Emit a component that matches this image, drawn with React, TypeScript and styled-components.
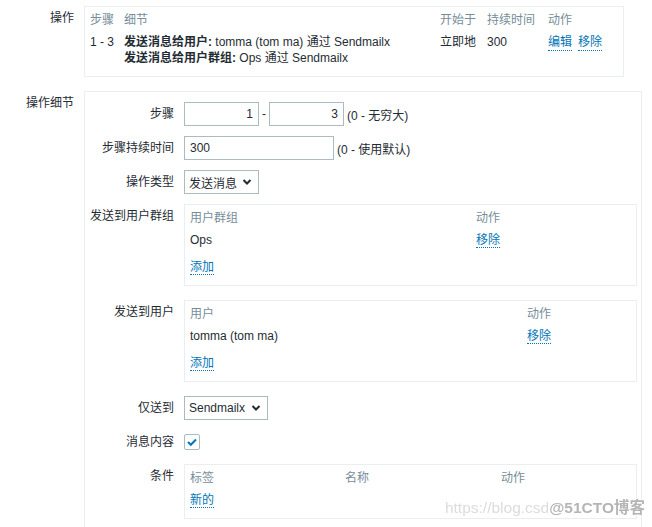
import React from 'react'
import styled, { createGlobalStyle } from 'styled-components'

const GlobalStyle = createGlobalStyle`
  html, body {
    margin: 0;
    padding: 0;
    background: #fff;
    overflow: hidden;
  }
  body {
    font-family: "Liberation Sans", Arial, "Noto Sans CJK SC", sans-serif;
    font-size: 12px;
    color: #1f2c33;
  }
`

const Page = styled.div`
  display: grid;
  grid-template-columns: 74px auto;
  column-gap: 10px;
  row-gap: 14px;
  padding-top: 6px;
  align-items: start;
`

const SectionLabel = styled.div`
  text-align: right;
  line-height: 24px;
  white-space: nowrap;
`

const TableBox = styled.div<{ $width: number }>`
  width: ${p => p.$width}px;
  box-sizing: border-box;
  border: 1px solid #ebeef0;
  padding: 5px 5px 10px;
`

const TRow = styled.div<{ $cols: string; $head?: boolean }>`
  display: grid;
  grid-template-columns: ${p => p.$cols};
  line-height: 16px;
  color: ${p => (p.$head ? '#768d99' : '#1f2c33')};
  white-space: nowrap;

  & + & {
    margin-top: 6px;
  }
`

const AddRow = styled.div`
  margin-top: 11px;
  line-height: 16px;
`

const Link = styled.a`
  color: #0275b8;
  text-decoration: none;
  border-bottom: 1px dotted #0275b8;
  cursor: pointer;
`

const Links = styled.div`
  display: flex;
  gap: 6px;
  align-items: flex-start;
`

const Detail = styled.div`
  display: flex;
  flex-direction: column;
`

const OuterBox = styled.div`
  width: 558px;
  height: 460px;
  box-sizing: border-box;
  border: 1px solid #ebeef0;
  padding: 10px 4px 0 0;
`

const FormRow = styled.div<{ $gap?: number }>`
  display: grid;
  grid-template-columns: 89px 453px;
  column-gap: 10px;
  align-items: start;
  padding-bottom: ${p => p.$gap ?? 10}px;
`

const FieldLabel = styled.label`
  text-align: right;
  line-height: 24px;
  white-space: nowrap;
`

const Field = styled.div`
  display: flex;
  align-items: center;
  min-height: 24px;
`

const TextInput = styled.input<{ $width: number; $right?: boolean }>`
  width: ${p => p.$width}px;
  height: 24px;
  box-sizing: border-box;
  border: 1px solid #acbbc2;
  padding: 0 5px;
  margin: 0;
  font: inherit;
  color: #1f2c33;
  text-align: ${p => (p.$right ? 'right' : 'left')};
  background: #fff;
  outline: none;
`

const Dash = styled.span`
  margin: 0 3px;
`

const Hint = styled.span`
  margin-left: 3px;
  white-space: nowrap;
`

const SelectBox = styled.div<{ $width: number }>`
  width: ${p => p.$width}px;
  height: 24px;
  box-sizing: border-box;
  border: 1px solid #acbbc2;
  padding: 0 6px 0 4px;
  display: flex;
  align-items: center;
  justify-content: space-between;
  background: #fff;
  white-space: nowrap;
`

const CheckField = styled.div`
  height: 24px;
  display: flex;
  align-items: center;
`

const CheckBox = styled.span`
  width: 16px;
  height: 16px;
  box-sizing: border-box;
  border: 1px solid #acbbc2;
  border-radius: 2px;
  display: flex;
  align-items: center;
  justify-content: center;
  background: #fff;
`

const Watermark = styled.div`
  position: fixed;
  right: 7px;
  bottom: 9px;
  font-size: 15.5px;
  line-height: 20px;
  white-space: nowrap;
  pointer-events: none;
`

const Faint = styled.span`
  color: #dcdcdc;
`

const Mark = styled.span`
  color: #b5b5b5;
  font-weight: bold;
  text-shadow: 0 0 2px #fff, 0 0 2px #fff;
`

const Chevron = () => (
  <svg width="10" height="10" viewBox="0 0 10 10">
    <polyline points="1.5,3 5,6.5 8.5,3" fill="none" stroke="#1f2c33" strokeWidth="2" />
  </svg>
)

const Check = () => (
  <svg width="12" height="12" viewBox="0 0 12 12">
    <polyline points="2,6 4.8,8.8 10,3.5" fill="none" stroke="#0275b8" strokeWidth="2" />
  </svg>
)

const opCols = '34px 316px 47px 61px 1fr'

export default function App() {
  return (
    <>
      <GlobalStyle />
      <Page>
        <SectionLabel>操作</SectionLabel>
        <TableBox $width={540}>
          <TRow $cols={opCols} $head>
            <span>步骤</span>
            <span>细节</span>
            <span>开始于</span>
            <span>持续时间</span>
            <span>动作</span>
          </TRow>
          <TRow $cols={opCols}>
            <span>1 - 3</span>
            <Detail>
              <span><b>发送消息给用户:</b> tomma (tom ma) 通过 Sendmailx</span>
              <span><b>发送消息给用户群组:</b> Ops 通过 Sendmailx</span>
            </Detail>
            <span>立即地</span>
            <span>300</span>
            <Links>
              <Link>编辑</Link>
              <Link>移除</Link>
            </Links>
          </TRow>
        </TableBox>

        <SectionLabel>操作细节</SectionLabel>
        <OuterBox>
          <FormRow>
            <FieldLabel>步骤</FieldLabel>
            <Field>
              <TextInput $width={75} $right defaultValue="1" readOnly />
              <Dash>-</Dash>
              <TextInput $width={75} $right defaultValue="3" readOnly />
              <Hint>(0 - 无穷大)</Hint>
            </Field>
          </FormRow>
          <FormRow>
            <FieldLabel>步骤持续时间</FieldLabel>
            <Field>
              <TextInput $width={150} defaultValue="300" readOnly />
              <Hint>(0 - 使用默认)</Hint>
            </Field>
          </FormRow>
          <FormRow>
            <FieldLabel>操作类型</FieldLabel>
            <Field>
              <SelectBox $width={75}>
                <span>发送消息</span>
                <Chevron />
              </SelectBox>
            </Field>
          </FormRow>
          <FormRow $gap={14}>
            <FieldLabel>发送到用户群组</FieldLabel>
            <TableBox $width={453}>
              <TRow $cols="286px 1fr" $head>
                <span>用户群组</span>
                <span>动作</span>
              </TRow>
              <TRow $cols="286px 1fr">
                <span>Ops</span>
                <span><Link>移除</Link></span>
              </TRow>
              <AddRow><Link>添加</Link></AddRow>
            </TableBox>
          </FormRow>
          <FormRow $gap={14}>
            <FieldLabel>发送到用户</FieldLabel>
            <TableBox $width={453}>
              <TRow $cols="337px 1fr" $head>
                <span>用户</span>
                <span>动作</span>
              </TRow>
              <TRow $cols="337px 1fr">
                <span>tomma (tom ma)</span>
                <span><Link>移除</Link></span>
              </TRow>
              <AddRow><Link>添加</Link></AddRow>
            </TableBox>
          </FormRow>
          <FormRow>
            <FieldLabel>仅送到</FieldLabel>
            <Field>
              <SelectBox $width={84}>
                <span>Sendmailx</span>
                <Chevron />
              </SelectBox>
            </Field>
          </FormRow>
          <FormRow>
            <FieldLabel>消息内容</FieldLabel>
            <CheckField>
              <CheckBox><Check /></CheckBox>
            </CheckField>
          </FormRow>
          <FormRow>
            <FieldLabel>条件</FieldLabel>
            <TableBox $width={453}>
              <TRow $cols="155px 156px 1fr" $head>
                <span>标签</span>
                <span>名称</span>
                <span>动作</span>
              </TRow>
              <TRow $cols="155px 156px 1fr">
                <span><Link>新的</Link></span>
              </TRow>
            </TableBox>
          </FormRow>
        </OuterBox>
      </Page>
      <Watermark>
        <Faint>https://blog.csd</Faint>
        <Mark>@51CTO博客</Mark>
      </Watermark>
    </>
  )
}
